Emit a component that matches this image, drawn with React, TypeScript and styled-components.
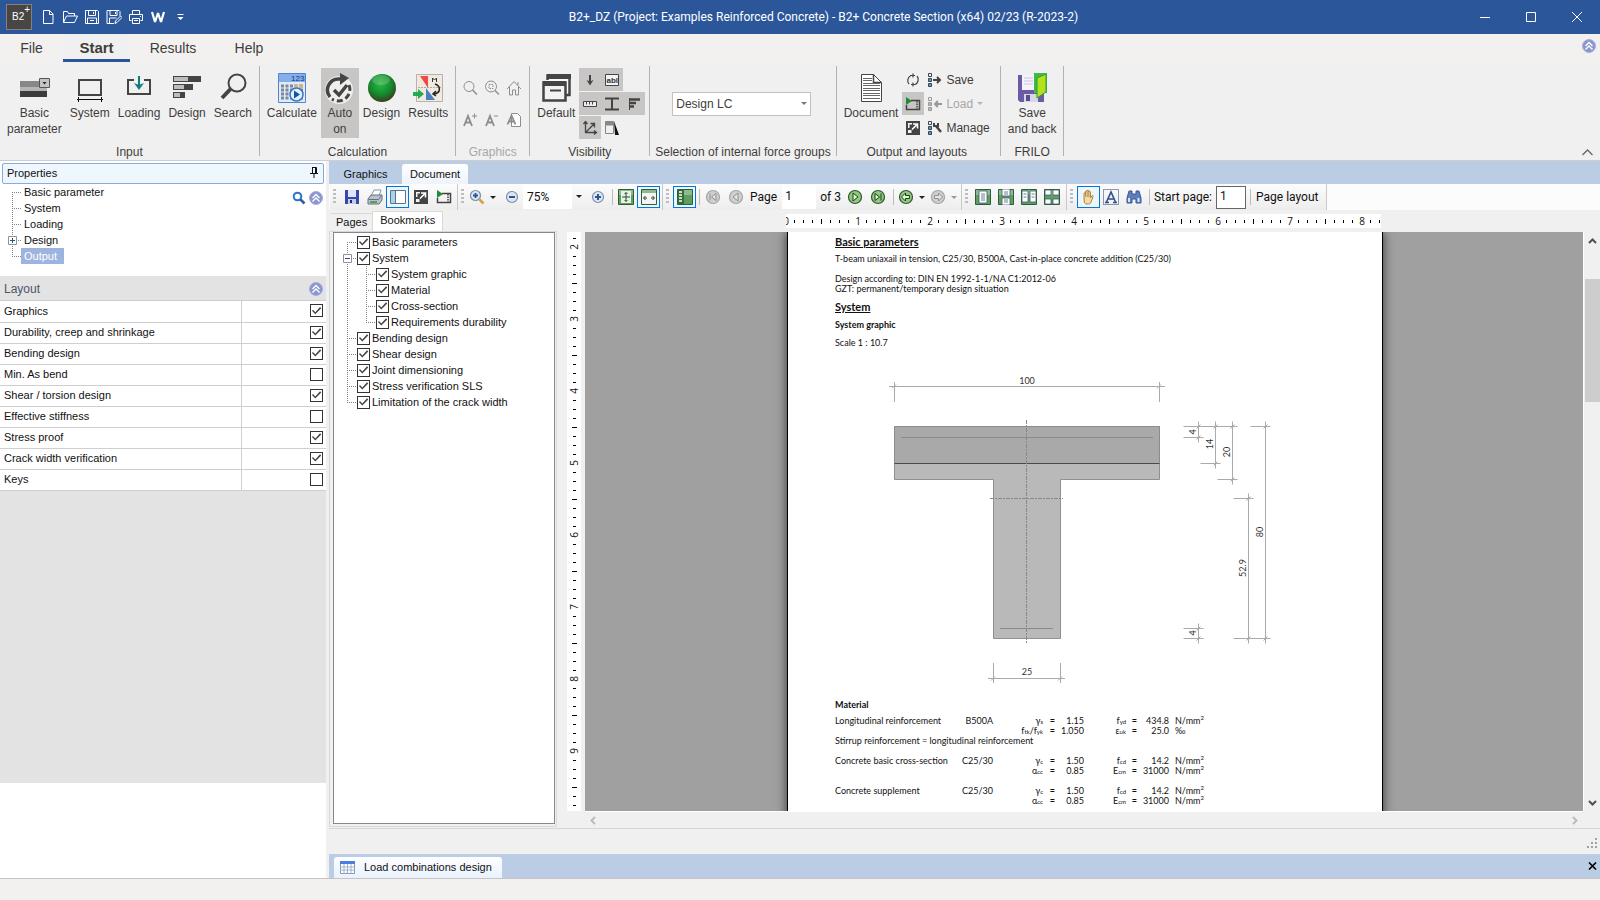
import React, { useState } from 'react';
import styled, { createGlobalStyle, css } from 'styled-components';

const UI = '"Liberation Sans", Arial, sans-serif';
const BAR = 'Roboto, "Noto Sans", sans-serif';
const DOC = 'Lato, "Liberation Sans", sans-serif';

const Global = createGlobalStyle`
  *, *::before, *::after { box-sizing: border-box; }
  body { margin: 0; font-family: ${UI}; font-size: 11px; color: #111; background: #f0f0f0; }
  button, input, select { font: inherit; color: inherit; }
  button { border: 0; background: none; padding: 0; }
  svg { display: block; flex: none; }
`;

const Shell = styled.div`
  display: flex;
  flex-direction: column;
  height: 100vh;
  min-height: 600px;
  overflow: hidden;
`;

/* ---------- title bar ---------- */
const TitleBar = styled.header`
  display: flex;
  align-items: center;
  height: 34px;
  flex: none;
  background: #2b579a;
  color: #fff;
  padding-left: 6px;
`;
const Logo = styled.div`
  display: flex;
  width: 26px;
  height: 26px;
  margin-right: 5px;
  padding: 4px 0 0 5px;
  border: 1px solid #87807a;
  background: #474644;
  font-size: 10px;
  line-height: 16px;
  sup { font-size: 10px; line-height: 8px; margin-top: -3px; }
`;
const QuickButton = styled.button`
  display: grid;
  place-items: center;
  width: 22px;
  height: 26px;
`;
const Title = styled.h1`
  flex: 1;
  margin: 0;
  padding: 0 6px 1px 0;
  text-align: center;
  font: 400 12px/18px ${BAR};
`;
const WindowButton = styled.button`
  display: grid;
  place-items: center;
  width: 46px;
  height: 34px;
`;

/* ---------- ribbon ---------- */
const MenuRow = styled.nav`
  display: flex;
  align-items: center;
  height: 28px;
  flex: none;
  background: #f3f1f0;
`;
const MenuTab = styled.button<{ $active?: boolean; $width: number }>`
  width: ${p => p.$width}px;
  height: 28px;
  padding-top: 2px;
  color: #3f3d3b;
  font-size: ${p => (p.$active ? 15 : 14)}px;
  font-weight: ${p => (p.$active ? 700 : 400)};
  border-bottom: 3px solid ${p => (p.$active ? '#2b579a' : 'transparent')};
  background: ${p => (p.$active ? '#f0f0f0' : 'none')};
`;
const HelpSlot = styled.button`
  margin: 0 4px 4px auto;
`;
const Ribbon = styled.div`
  display: flex;
  flex: none;
  height: 99px;
  padding: 4px 0;
  background: #f0f0f0;
  border-bottom: 1px solid #cfcdcb;
  font-size: 12px;
  color: #3f3d3b;
`;
const Group = styled.section<{ $dim?: boolean; $wide?: boolean }>`
  display: flex;
  flex-direction: column;
  justify-content: space-between;
  border-right: 1px solid #b4b2b0;
  padding: 2px ${p => (p.$wide ? 6 : 3)}px 0 3px;
  height: 90px;
  h2 {
    margin: 0;
    padding: 0 2px;
    text-align: center;
    font: 400 12px/8px ${UI};
    white-space: nowrap;
    color: ${p => (p.$dim ? '#a9a7a5' : 'inherit')};
  }
`;
const GroupBody = styled.div`
  display: flex;
  align-items: flex-start;
`;
const BigButton = styled.button<{ $pressed?: boolean }>`
  display: flex;
  flex-direction: column;
  align-items: center;
  min-width: 38px;
  height: 70px;
  padding: 4px 4px 0;
  line-height: 16px;
  white-space: pre;
  background: ${p => (p.$pressed ? '#c8c6c4' : 'none')};
  svg { margin: 0 -2px 1px; }
`;
const IconGrid = styled.div<{ $cell: number; $top?: number }>`
  display: grid;
  margin: 0 1px 0 0;
  padding-top: ${p => p.$top || 0}px;
  grid-template-columns: repeat(3, 22px);
  grid-auto-rows: ${p => p.$cell - 1}px;
  row-gap: 1px;
`;
const Toggle = styled.button<{ $pressed?: boolean }>`
  display: grid;
  place-items: center;
  width: 22px;
  min-height: 23px;
  background: ${p => (p.$pressed ? '#c8c6c4' : 'none')};
`;
const Column = styled.div`
  display: flex;
  flex-direction: column;
  gap: 1px;
`;
const RibbonLine = styled.button`
  display: flex;
  align-items: center;
  gap: 4px;
  height: 23px;
  padding: 0 4px;
  &:disabled { color: #a9a7a5; }
`;
const SelectWrap = styled.label<{ $ribbon?: boolean }>`
  position: relative;
  display: block;
  width: ${p => (p.$ribbon ? 139 : 63)}px;
  margin: ${p => (p.$ribbon ? '24px 0 0 19px' : '0')};
  select {
    width: 100%;
    height: ${p => (p.$ribbon ? 24 : 24)}px;
    padding: 0 0 0 ${p => (p.$ribbon ? 3 : 4)}px;
    appearance: none;
    border: ${p => (p.$ribbon ? '1px solid #c3c1bf' : '0')};
    border-radius: 0;
    background: ${p => (p.$ribbon ? '#fff' : 'linear-gradient(90deg, #fff 49px, transparent 49px)')};
  }
  svg { position: absolute; right: 4px; top: 10px; pointer-events: none; }
`;
const Collapse = styled.button`
  margin: auto 7px 0 auto;
`;

/* ---------- body ---------- */
const Body = styled.main`
  display: flex;
  flex: 1;
  min-height: 0;
  gap: 3px;
`;
const Side = styled.aside`
  display: flex;
  flex-direction: column;
  width: 326px;
  flex: none;
  background: #fff;
`;
const PanelHead = styled.div`
  display: flex;
  justify-content: space-between;
  align-items: center;
  height: 21px;
  margin: 2px 2px 0;
  padding: 0 5px 2px 4px;
  border: 1px solid #86abe0;
  border-radius: 2px;
  background: #eef6fe;
`;
const TreeArea = styled.div`
  display: flex;
  justify-content: space-between;
  height: 92px;
  padding: 0 3px 0 7px;
`;
const TreeTools = styled.div`
  display: flex;
  align-items: center;
  gap: 3px;
  height: 24px;
  margin-top: 2px;
`;
const List = styled.ul`
  list-style: none;
  margin: 0;
  padding: 0;
`;
const TreeItem = styled.li<{ $selected?: boolean }>`
  display: flex;
  height: 16px;
  button { padding: 0 7px 0 3px; line-height: 15px; }
  ${p => p.$selected && css`button { background: #9db4de; color: #fff; }`}
`;
const SectionHead = styled.div`
  display: flex;
  justify-content: space-between;
  align-items: center;
  height: 25px;
  padding: 1px 3px 0 4px;
  border-bottom: 1px solid #cdcdcd;
  background: #e3e3e3;
  color: #4c5567;
  font-size: 12px;
`;
const PropTable = styled.table`
  width: 100%;
  table-layout: fixed;
  border-collapse: collapse;
  th, td { height: 21px; padding: 0 4px 1px; border-bottom: 1px solid #cfcfcf; }
  th { width: 241px; border-right: 1px solid #cfcfcf; font-weight: 400; text-align: left; }
  td { padding: 0 3px 1px; }
  input { display: block; margin-left: auto; }
`;
const Check = styled.input.attrs({ type: 'checkbox' })`
  appearance: none;
  width: 13px;
  height: 13px;
  margin: 0;
  flex: none;
  border: 1px solid #333;
  background: #fff;
  &:checked::before {
    content: '';
    display: block;
    width: 11px;
    height: 11px;
    background: #444;
    clip-path: polygon(9% 50%, 18% 42%, 39% 64%, 82% 17%, 93% 27%, 39% 82%);
  }
`;
const GreyFill = styled.div`
  flex: 1;
  background: #e3e3e3;
`;
const WhiteFill = styled.div`
  height: 95px;
`;

/* ---------- document side ---------- */
const Work = styled.section`
  display: flex;
  flex-direction: column;
  flex: 1;
  min-width: 0;
`;
const TabStrip = styled.div`
  display: flex;
  align-items: flex-end;
  height: 23px;
  flex: none;
  background: #bbcde5;
`;
const ViewTab = styled.button<{ $active?: boolean }>`
  height: 20px;
  padding: 0 8px 1px;
  border-radius: 3px 3px 0 0;
  background: ${p => (p.$active ? 'linear-gradient(#fdfeff, #eef4fc)' : 'none')};
  &:first-child { width: 73px; }
`;
const ToolBar = styled.div`
  display: flex;
  flex: none;
  height: 26px;
  padding-left: 1px;
  background: #fcfcfc;
  font: 12px/16px ${BAR};
`;
const ToolGroup = styled.div`
  display: flex;
  align-items: center;
  padding-right: 2px;
  background: linear-gradient(#fcfcfc, #ededed);
  border-right: 1px solid #c9c9c9;
  white-space: nowrap;
`;
const Grip = styled.span`
  width: 3px;
  height: 16px;
  margin: 0 4px 0 3px;
  background: repeating-linear-gradient(#bdbdbd 0 2px, transparent 2px 4px);
`;
const ToolButton = styled.button<{ $on?: boolean; $w?: number }>`
  display: grid;
  place-items: center;
  width: ${p => p.$w || 23}px;
  height: 22px;
  ${p => p.$on && css`border: 1px solid #0078d7; background: #eef5fc;`}
`;
const ToolSep = styled.span`
  width: 1px;
  height: 16px;
  margin: 0 1px 0 3px;
  background: #bdbdbd;
`;
const ToolText = styled.button`
  padding: 0 6px 0 4px;
`;
const PageInput = styled.label<{ $boxed?: boolean }>`
  display: flex;
  align-items: center;
  gap: ${p => (p.$boxed ? 4 : 5)}px;
  padding: 0 ${p => (p.$boxed ? 1 : 4)}px 0 3px;
  input {
    width: ${p => (p.$boxed ? 30 : 34)}px;
    height: ${p => (p.$boxed ? 23 : 24)}px;
    padding: 0 3px 2px;
    border: ${p => (p.$boxed ? '1px solid #666' : '0')};
    background: #fff;
  }
`;
const PageCount = styled.span`
  padding-right: 3px;
`;
const Viewer = styled.div`
  display: flex;
  flex: 1;
  min-height: 0;
  border-bottom: 1px solid #d5d5d5;
`;
const Marks = styled.aside`
  display: flex;
  flex-direction: column;
  width: 228px;
  flex: none;
  padding: 1px 0;
`;
const MarkTabs = styled.div`
  display: flex;
  align-items: flex-end;
  padding-left: 2px;
`;
const MarkTab = styled.button<{ $active?: boolean }>`
  height: ${p => (p.$active ? 20 : 18)}px;
  padding: 0 ${p => (p.$active ? 7 : 5)}px ${p => (p.$active ? 3 : 1)}px;
  border: 1px solid #d9d9d9;
  border-width: 1px ${p => (p.$active ? 1 : 0)}px 0;
  background: ${p => (p.$active ? '#fff' : '#f0f0f0')};
`;
const MarkFrame = styled.div`
  flex: 1;
  padding: 0 1px 2px 3px;
  border: 1px solid #d9d9d9;
`;
const MarkBox = styled.div`
  height: 100%;
  padding: 1px 0 0 8px;
  border: 1px solid #828790;
  background: #fff;
`;
const MarkItem = styled.li`
  display: flex;
  align-items: center;
  height: 16px;
  label { display: flex; align-items: center; gap: 2px; white-space: nowrap; }
`;
const Sheet = styled.div`
  display: grid;
  flex: 1;
  min-width: 0;
  padding-left: 10px;
  grid-template-columns: 14px minmax(0, 1fr) 17px;
  grid-template-rows: 22px minmax(0, 1fr) 17px;
`;
const TopRuler = styled.div`
  grid-column: 2;
  display: flex;
  justify-content: center;
  align-items: flex-start;
  padding: 4px 0 0 2px;
`;
const LeftRuler = styled.div`
  grid-column: 1;
  grid-row: 2;
  overflow: hidden;
  background: #fff;
`;
const Canvas = styled.div`
  grid-column: 2;
  grid-row: 2;
  display: flex;
  justify-content: center;
  overflow: hidden;
  margin-left: 4px;
  padding-left: 2px;
  background: #a0a0a0;
`;
const Page = styled.article`
  width: 596px;
  flex: none;
  height: 840px;
  padding-left: 47px;
  border: solid #000;
  border-width: 0 1px;
  background: #fff;
  box-shadow: 0 0 10px #333;
  color: #111;
  font: 9px/10px ${DOC};
`;
const DocHeading = styled.h2`
  margin: 0;
  font: 700 11px/20px ${DOC};
  text-decoration: underline;
`;
const DocSub = styled.h3`
  margin: 0;
  font: 700 9px/10px ${DOC};
`;
const DocLine = styled.p<{ $top: number }>`
  margin: ${p => p.$top}px 0 0;
`;
const Space = styled.div<{ $h: number }>`
  height: ${p => p.$h}px;
`;
const MaterialTable = styled.table`
  width: 400px;
  margin-top: 6px;
  table-layout: fixed;
  border-collapse: collapse;
  td { height: 10px; padding: 0; text-align: right; line-height: 10px; white-space: nowrap; }
  td:last-child { padding-left: 6px; text-align: left; }
  td:first-child { padding-left: 0; text-align: left; }
  td:nth-child(4), td:nth-child(7) { font-weight: 700; }
  sub, sup { font-size: 6px; line-height: 1px; }
  sub { vertical-align: baseline; }
`;
const VScroll = styled.div`
  grid-column: 3;
  grid-row: 2;
  display: flex;
  flex-direction: column;
  align-items: center;
  border-left: 1px solid #fff;
  padding: 5px 0 4px;
`;
const Thumb = styled.div`
  width: 15px;
  height: 123px;
  margin: 33px 0 auto;
  background: #cdcdcd;
`;
const HScroll = styled.div`
  grid-column: 2;
  grid-row: 3;
  display: flex;
  align-items: center;
  justify-content: space-between;
  margin-left: 4px;
  padding: 0 4px;
  border-top: 1px solid #fff;
`;
const Resize = styled.div`
  display: flex;
  justify-content: flex-end;
  align-items: flex-end;
  height: 25px;
  padding: 0 3px 6px;
  flex: none;
`;
const Dock = styled.div`
  display: flex;
  align-items: flex-end;
  justify-content: space-between;
  height: 24px;
  flex: none;
  padding: 0 3px 0 5px;
  background: #bbcde5;
`;
const DockTab = styled.button`
  display: flex;
  align-items: center;
  gap: 9px;
  height: 21px;
  padding: 0 10px 1px 6px;
  border-radius: 3px 3px 0 0;
  background: linear-gradient(#fdfeff, #e9f2fd);
`;
const DockClose = styled.button`
  align-self: center;
`;
const StatusBar = styled.footer`
  height: 22px;
  flex: none;
  border-top: 1px solid #c6c4c2;
  background: #f2f1f0;
`;

/* ---------- icons ---------- */
const D = '#444';
const Svg = ({ w = 16, h = w, children, ...r }: any) => (
  <svg width={w} height={h} viewBox={`0 0 ${w} ${h}`} fill="none" aria-hidden="true" {...r}>{children}</svg>
);
const Caret = ({ c = '#222' }: { c?: string }) => <Svg w={6} h={3}><path d="M0 0h6L3 3z" fill={c} /></Svg>;
const Orb = () => (
  <Svg w={14}>
    <circle cx="7" cy="7" r="6.500" fill="#8b96cf" stroke="#a6aede" />
    <path d="M3.500 7 7 3.500 10.500 7M3.500 10.500 7 7l3.500 3.500" stroke="#fff" strokeWidth="1.300" />
  </Svg>
);

const quick: [string, React.ReactNode][] = [
  ['New', <Svg w={16}><path d="M3.500 1.500h6l3.500 3.500v9.500h-9.500zM9.500 1.500v4h3.500" stroke="#fff" /></Svg>],
  ['Open', <Svg w={16}><path d="M1.500 13.500v-11h4l1 2h6v2.500M1.500 13.500l3-6.500h11l-3 6.500z" stroke="#fff" /></Svg>],
  ['Save', <Svg w={16}><path d="M1.500 1.500h12l1 1v12h-13zM4.500 1.500v5h7v-5M3.500 14.500v-5.500h9v5.500M6 11.500h4M9.500 3v2" stroke="#fff" /></Svg>],
  ['Save as', <Svg w={16}><path d="M8 14.500H1v-13h12l1 1V7M4 1.500v5h7v-5M3.500 14V9h7M9.500 3v2M9 14.500l.5-2.500 5-5 1.500 1.500-5 5z" stroke="#fff" /></Svg>],
  ['Print', <Svg w={16}><path d="M4.500 5.500v-4h7v4M3.500 11.500h-2v-6h13v6h-2M4.500 9.500h7v5h-7zM6 11.500h4M12 7.500h1" stroke="#fff" /></Svg>],
  ['Word', <Svg w={16}><path d="M2 3l3 10L8 4l3 9 3-10" stroke="#fff" strokeWidth="2.200" strokeLinejoin="bevel" /></Svg>],
  ['Customize', <Svg w={16}><path d="M5.500 5.500h6" stroke="#fff" /><path d="M5.500 8h6l-3 3z" fill="#fff" /></Svg>],
];

const IcoParam = () => <Svg w={32}><path d="M2 9h20v6H2z" fill="#888" /><path d="M2 15h27v5H2z" fill="#b5b5b5" /><path d="M2 19h27v6H2z" fill="#3c3c3c" /><path d="M21.500 6.500h10v9h-10z" fill="#c4c4c4" stroke="#555" /><path d="M24.500 10h4l-2 2.500z" fill="#222" /></Svg>;
const IcoSystem = () => <Svg w={32}><path d="M5 8h22v15H5z" stroke={D} strokeWidth="2" /><path d="M3 27.500h26M4.500 25v5M27.500 25v5" stroke="#111" /></Svg>;
const IcoLoading = () => <Svg w={32}><path d="M11 8H5v14h22V8h-6" stroke={D} strokeWidth="2" /><path d="M16 4v10" stroke="#0b7d7c" strokeWidth="2" /><path d="M11 11l5 2 5-2-5 7z" fill="#0b7d7c" /></Svg>;
const IcoDesign = () => <Svg w={32}><path d="M2 4h28v6H2zM2 12h20v6H2zM2 20h12v6H2z" fill={D} /><path d="M3 5h14v4H3zM3 13h10v4H3zM3 21h6v4H3z" fill="#bdbdbd" /></Svg>;
const IcoSearch = () => <Svg w={32}><circle cx="20" cy="11" r="8.500" stroke={D} strokeWidth="2" /><path d="M13.500 17 5 26" stroke={D} strokeWidth="4" /></Svg>;
const IcoCalc = () => (
  <Svg w={32}>
    <path d="M2.500 1.500h27v29h-27z" fill="#dfeafb" stroke="#4f86d4" />
    <path d="M3 2h26v8H3z" fill="#86aeea" />
    <text x="15" y="9" fontSize="8" fill="#123a80" fontFamily="Liberation Sans">123</text>
    {[14, 18, 22, 26].map(y => <path key={y} d={`M5 ${y}h3M9.500 ${y}h3M14 ${y}h3M18.500 ${y}h3M23 ${y}h4`} stroke="#7d8796" strokeWidth="3" />)}
    <path d="M18.500 14h3M23 14h4" stroke="#e0b064" strokeWidth="3" />
    <circle cx="20.500" cy="22.500" r="6.500" fill="#e3f1fd" stroke="#3876c7" strokeWidth="1.500" />
    <path d="M18 18.500v8l6-4z" fill="#17539f" />
  </Svg>
);
const IcoAuto = () => (
  <Svg w={32}>
    <circle cx="15" cy="18" r="14" fill="#fff" opacity=".7" />
    <path d="M6 25A11 11 0 0 1 15 7h4" stroke={D} strokeWidth="3.500" />
    <path d="M16 1l9 5-9 7z" fill={D} />
    <path d="M25 13a11.500 11.500 0 0 1-17 14" stroke={D} strokeWidth="3" strokeDasharray="6 3" />
    <path d="M10 18l5 5 8-10" stroke={D} strokeWidth="3.500" />
  </Svg>
);
const IcoBall = () => (
  <Svg w={32}>
    <defs><radialGradient id="ball" cx=".45" cy=".35" r=".65"><stop offset="0" stopColor="#2fb847" /><stop offset=".6" stopColor="#128a2e" /><stop offset="1" stopColor="#3a3f1c" /></radialGradient></defs>
    <circle cx="16" cy="16" r="14" fill="url(#ball)" />
    <ellipse cx="15" cy="8" rx="9" ry="5" fill="#fff" opacity=".18" />
  </Svg>
);
const IcoResults = () => (
  <Svg w={32}>
    <path d="M4.500 2.500h26v27h-26z" fill="#efe9df" stroke="#b9b0a6" />
    <path d="M8 4h8v12z" fill="#ec4a4a" /><path d="M14 16v12h9z" fill="#4d7fc0" />
    <path d="M6 15.500h23" stroke="#aaa" strokeDasharray="2 1" />
    <path d="M20.500 10V6l2 2 2-2v4" stroke="#333" /><path d="M23 12c6 2 6 9-1 10M24 19l-3 3 3 2" stroke="#222" strokeWidth="1.500" />
    <path d="M1 20h5v-3l6 5-6 5v-3H1z" fill="#1fae4b" />
  </Svg>
);
const IcoDefault = () => <Svg w={32}><path d="M6 2h24v22H6z" fill="#fff" opacity=".6" /><path d="M7.500 8V3.500h22V23H25" stroke={D} strokeWidth="2.500" /><path d="M7 2h24v5H7z" fill={D} /><path d="M3.500 10.500h22v18h-22z" stroke={D} strokeWidth="2.500" fill="#f2f2f2" /><path d="M3 9h23v5H3z" fill={D} /><path d="M10 18.500h11" stroke={D} strokeWidth="2" /></Svg>;
const IcoDocument = () => <Svg w={32}><path d="M6.500 2.500h12l8 8v19h-20z" fill="#fff" stroke={D} /><path d="M18.500 2.500v8h8" stroke={D} strokeWidth="1.500" />{[7, 9, 12, 14, 17, 19, 22, 24, 27].map(y => <path key={y} d={`M8 ${y - 0.5}h${y < 11 ? 9 : 17}`} stroke="#666" />)}</Svg>;
const IcoSaveBack = () => (
  <Svg w={32}>
    <path d="M2 3h26v27H4l-2-2z" fill="#6b5ba5" /><path d="M6 3h14v15H6z" fill="#f4f2fa" />
    <path d="M8 6h9M8 9h9M8 12h9" stroke="#c9c9d6" /><path d="M8 22h14v8H8z" fill="#d8d6e2" /><path d="M10 23h4v6h-4z" fill="#5b4d93" />
    <path d="M18 1h13v20H18z" fill="#3fb94a" /><path d="M21 6l9-4v18l-9 6z" fill="#b5e01c" stroke="#28a03b" />
  </Svg>
);
const g = '#8d8d8d';
const graphicsIcons: [string, React.ReactNode][] = [
  ['Zoom', <Svg w={16}><circle cx="7" cy="6.500" r="5" stroke={g} /><path d="M10.500 10l4.500 4.500" stroke={g} strokeWidth="1.500" /></Svg>],
  ['Zoom window', <Svg w={16}><circle cx="7" cy="6.500" r="5.500" stroke={g} /><path d="M5 4.500h4v4H5z" stroke={g} strokeDasharray="1.500 1" /><path d="M11 10.500l4 4" stroke={g} strokeWidth="1.500" /></Svg>],
  ['Home', <Svg w={16}><path d="M1 9l7-7.500L15 9M3.500 7v8h3v-5h3v5h3V7M12 5V2" stroke={g} /></Svg>],
  ['Larger font', <Svg w={16}><path d="M2 14l4-10 4 10M3.500 10.500h5" stroke={g} strokeWidth="1.800" /><path d="M10 4h5M12.500 1.500v5" stroke={g} /></Svg>],
  ['Smaller font', <Svg w={16}><path d="M2 14l4-10 4 10M3.500 10.500h5" stroke={g} strokeWidth="1.800" /><path d="M10 4h4" stroke={g} /></Svg>],
  ['Font settings', <Svg w={16}><path d="M5.500 1.500h6l3 3v10h-9z" fill="#fff" stroke={g} /><path d="M1.500 12.500l4-9 4 9M3 9.500h5" stroke={g} strokeWidth="1.800" /></Svg>],
];
const visIcons: [string, boolean, React.ReactNode][] = [
  ['Loads', true, <Svg w={16}><path d="M8 3v9" stroke={D} strokeWidth="2" /><path d="M4.500 8L8 9.500 11.500 8 8 13.500z" fill={D} /></Svg>],
  ['Labels', true, <Svg w={16}><path d="M1.500 2.500h13v11h-13z" fill="#f3f3f3" stroke={D} /><text x="2.500" y="11" fontSize="8" fontWeight="700" fill="#333" fontFamily="Liberation Sans">abl</text></Svg>],
  ['', false, null],
  ['Dimensions', true, <Svg w={16}><path d="M1.500 5.500h13v5h-13zM4.500 5.500v3M7.500 5.500v3M10.500 5.500v3" fill="#eee" stroke={D} /></Svg>],
  ['Section', true, <Svg w={16}><path d="M1 2.500h14M1 13.500h14M8 2v11" stroke={D} strokeWidth="2" /></Svg>],
  ['Diagram', true, <Svg w={16}><path d="M3 3.500h11M3 7h7M3 10.500h5" stroke={D} strokeWidth="2.500" /><path d="M3.500 2v12" stroke={D} /></Svg>],
  ['Axes', true, <Svg w={16}><path d="M3.500 2v10.500H14M3.500 12.500L12 4M1.500 4l2-2.500 2 2.500M12 10.500l2.500 2-2.500 2M8.500 3.500h4v4" stroke={D} strokeWidth="1.300" /></Svg>],
  ['Hatching', false, <Svg w={16}><path d="M1.500 1.500h8v4h-8z" fill="#888" /><path d="M1.500 1.500h8v12h-8z" stroke="#888" /><path d="M10 1l5 14h-4z" fill="#111" /></Svg>],
];
const IcoRefresh = () => <Svg w={16}><path d="M6 3.500a5.500 5.500 0 0 0-2 8.500M10 12.500a5.500 5.500 0 0 0 2-8.500M5 3.500h5M8 1.500v4M11 12.500H6M8 10.500v4" stroke={D} strokeWidth="1.200" /></Svg>;
const IcoRun = () => <Svg w={16}><path d="M6 4.500h8.500v9h-13V9" stroke={D} strokeWidth="1.500" /><path d="M12 5v8" stroke={D} strokeWidth="1.500" strokeDasharray="1.500 1" /><path d="M1 1l6 4-6 4z" fill="#1f8b35" /></Svg>;
const IcoExport = () => <Svg w={16}><path d="M1 1h14v14H1z" fill={D} /><path d="M3 3h4v1.500H4.500V8H3zM3 10h3.500v3H3z" fill="#f3f3f3" /><path d="M7 9.500l5-5M8 4h4.500v4.500" stroke="#fff" strokeWidth="1.600" /></Svg>;
const Boxes = ({ kind, off }: { kind: string; off?: boolean }) => {
  const c = off ? '#999' : D;
  const f = off ? '#bbb' : '#3aa4e8';
  return (
    <Svg w={14}>
      <path d="M.5.500h3v3h-3z" stroke={c} /><path d="M.5 5.500h3v3h-3zM.5 10.500h3v3h-3z" fill={f} stroke={c} />
      {kind === 'out' && <path d="M5 7h6M9 4l3 3-3 3" stroke={c} strokeWidth="2" />}
      {kind === 'in' && <path d="M14 7H8M10 4L7 7l3 3" stroke={c} strokeWidth="2" />}
      {kind === 'tool' && <path d="M8 5l5 6" stroke={c} strokeWidth="2.500" />}
      {kind === 'tool' && <path d="M6 2v3h4V2" stroke={c} strokeWidth="2" />}
    </Svg>
  );
};

/* viewer tool icons */
const Green = ({ children }: { children?: React.ReactNode }) => (
  <Svg w={16}><path d="M.5.500h15v15H.5z" fill="#5f9d63" stroke="#2d5f36" /><path d="M1 1h14v5H1z" fill="#a9d0aa" opacity=".6" />{children}</Svg>
);
const Disc = ({ d, off, lines }: { d: string; off?: boolean; lines?: string }) => (
  <Svg w={16}>
    <circle cx="8" cy="8" r="6.500" fill={off ? '#cfcfcf' : '#8fc97e'} stroke={off ? '#a5a5a5' : '#31572f'} strokeWidth="1.200" />
    <path d={d} fill={off ? '#e3e3e3' : '#e4f6df'} stroke={off ? '#909090' : '#1d3b1d'} />
    {lines && <path d={lines} stroke={off ? '#909090' : '#1d3b1d'} />}
  </Svg>
);
const Blue = ({ plus }: { plus?: boolean }) => (
  <Svg w={14}><circle cx="7" cy="7" r="5.500" fill="#dbe6f2" stroke="#7d90a8" strokeWidth="1.200" /><path d={plus ? 'M4 7h6M7 4v6' : 'M4 7h6'} stroke="#2d5591" strokeWidth="2" /></Svg>
);
const IcoDisk = () => <Svg w={16}><path d="M1 1h14v14H1z" fill="#3a49a8" /><path d="M4 1h8v7H4z" fill="#dfe5f8" /><path d="M4 10h8v5H4z" fill="#c5cbe6" /><path d="M6 11h2v3H6z" fill="#1d2a70" /></Svg>;
const IcoPrinter = () => <Svg w={16}><path d="M4 7l3-6h7l-2 6z" fill="#fff" stroke="#8794a8" /><path d="M1 10l3-4h11v5l-3 4H1z" fill="#b9c3d0" stroke="#66707f" /><path d="M1.500 10.500h10l3-4" stroke="#66707f" /><path d="M3 12h7v2H3z" fill="#4aa64f" /></Svg>;
const IcoPane = () => <Svg w={16}><path d="M.5 1.500h15v13H.5z" fill="#fff" stroke="#5d7488" /><path d="M1 2h4v12H1z" fill="#a9d3ea" /><path d="M5.500 2v12" stroke="#5d7488" /></Svg>;
const IcoLens = () => <Svg w={16}><circle cx="6.500" cy="6.500" r="5" fill="#dbe8f5" stroke="#7d90a8" strokeWidth="1.200" /><path d="M4 6.500h5M6.500 4v5" stroke="#2d5591" strokeWidth="1.800" /><path d="M10.500 10.500l4 4" stroke="#d8a13c" strokeWidth="2.500" /></Svg>;
const IcoFit = () => <Green><path d="M3 2h10v12H3z" fill="#e8f3e8" /><path d="M8 3.500v9M4 8h8M6.500 5L8 3.500 9.500 5M6.500 11L8 12.500 9.500 11" stroke="#2a4d2e" /></Green>;
const IcoWidth = () => <Green><path d="M1 4h14v11H1z" fill="#f2f6f2" /><path d="M3 9h3M10 9h3M4.500 7L2.500 9l2 2M11.500 7l2 2-2 2" stroke="#333" /></Green>;
const IcoThumbs = () => <Green><path d="M1 1h6v14H1z" fill="#356c3c" /><path d="M2 3h3M2 6h3M2 9h3M2 12h3" stroke="#fff" strokeWidth="1.500" /></Green>;
const Leaf = ({ x, y, w, h }: any) => <path d={`M${x} ${y}h${w}v${h}h-${w}z`} fill="#fff" stroke="#3f5a72" strokeWidth=".8" />;
const IcoHand = () => <Svg w={16}><path d="M4 9V4.500c0-1 1.500-1 1.500 0V2.500c0-1 1.600-1 1.600 0V2c0-1 1.700-1 1.700 0v1c0-1 1.600-1 1.600 0V9l1.200-2c.8-1 1.900-.3 1.500.6L11 13c-.5 1.500-1 2-2.500 2H7c-1.500 0-2.300-.8-2.700-2z" fill="#f6dca4" stroke="#a8823f" /><path d="M5.600 4v4M7.200 3v5M8.800 3v5" stroke="#a8823f" strokeWidth=".8" /></Svg>;
const IcoTextSel = () => <Svg w={16}><path d="M.5.500h15v15H.5z" stroke="#223a66" strokeDasharray="1 1" /><path d="M3.500 13L8 3l4.500 10M5 10h6M2 13.500h4M10 13.500h4" stroke="#2f4f8f" strokeWidth="1.600" /></Svg>;
const IcoBino = () => <Svg w={16}><path d="M3 2h3v3h4V2h3l2 7v5h-5v-4H6v4H1V9z" fill="#5a7dbd" stroke="#3a5a92" /><path d="M3 9v4M12.500 9v4" stroke="#d8e4f8" strokeWidth="2" /></Svg>;
const Chevron = ({ d, c = '#505050' }: { d: string; c?: string }) => <Svg w={9}><path d={d} stroke={c} strokeWidth="2" /></Svg>;

/* dotted connector in front of a tree entry */
const Branch = ({ w, last, first, box, deep }: { w: number; last?: boolean; first?: boolean; box?: 'plus' | 'minus'; deep?: boolean }) => (
  <Svg w={w} h={16} stroke="#808080">
    {deep && <path d="M5.500 0v16" strokeDasharray="1 1" />}
    <path d={`M${deep ? 24 : 5}.500 ${first ? 8 : 0}v${first || last ? 8 : 16}`} strokeDasharray="1 1" />
    <path d={`M${deep ? 24 : 5} 8.500h${w - (deep ? 24 : 5)}`} strokeDasharray="1 1" />
    {box && <path d="M1.500 4.500h8v8h-8z" fill="#fff" stroke="#919191" />}
    {box && <path d={box === 'plus' ? 'M3 8.500h5M5.500 6v5' : 'M3 8.500h5'} stroke="#2b4f9a" />}
  </Svg>
);

const HRuler = () => (
  <Svg w={595} h={14}>
    <path d="M0 0h595v14H0z" fill="#fff" />
    {Array.from({ length: 67 }, (_, i) => i).map(i =>
      i % 8 === 0
        ? <text key={i} x={i * 9} y="11" fontSize="10" textAnchor="middle" fill="#111" fontFamily="Open Sans">{i / 8}</text>
        : <path key={i} d={`M${i * 9 - 1}.500 ${i % 4 ? 6 : 5}v${i % 4 ? 3 : 5}`} stroke="#000" />)}
  </Svg>
);
const VRuler = () => (
  <Svg w={14} h={580}>
    {Array.from({ length: 64 }, (_, i) => i).map(i => {
      const y = 6 + i * 9;
      return (i + 15) % 8 === 0
        ? <text key={i} transform={`translate(11 ${y}) rotate(-90)`} fontSize="10" textAnchor="middle" fill="#111" fontFamily="Open Sans">{(i + 15) / 8}</text>
        : <path key={i} d={`M${i % 4 === 1 ? 5 : 6} ${y}.500h${i % 4 === 1 ? 5 : 3}`} stroke="#000" />;
    })}
  </Svg>
);

/* dimension chain of the section drawing */
const DimV = ({ x, y1, y2, label, ty }: any) => (
  <>
    <path d={`M${x} ${y1 - 5}V${y2 + 5}M${x - 15} ${y1}h20M${x - 15} ${y2}h20M${x - 2} ${y1 + 2}l4-4M${x - 2} ${y2 + 2}l4-4`} />
    <text transform={`translate(${x - 3} ${ty}) rotate(-90)`}>{label}</text>
  </>
);
const Drawing = styled.svg`
  text {
    stroke: none;
    fill: #333;
    font: 9px ${DOC};
    text-anchor: middle;
  }
`;
const SectionDrawing = () => (
  <Drawing width="460" height="320" viewBox="0 0 460 320" fill="none" stroke="#aaa" role="img" aria-label="T-beam cross-section">
    <path d="M59.500 56.500h265v53h-99v159h-67v-159h-99z" fill="#b9b9b9" stroke="#909090" />
    <path d="M59.500 56.500h265v37h-265z" fill="#a9a9a9" stroke="#8c8c8c" />
    <path d="M59.500 93.500h265" stroke="#4a4a4a" />
    <path d="M66 67.500h252M165 258.500h53" stroke="#8a8a8a" />
    <path d="M191.500 50v224M155 128.500h73" stroke="#888" strokeDasharray="4 1 2 1" />
    <path d="M54 16.500h276M59.500 12v20M324.500 12v20M57 18.500l4-4M322 18.500l4-4" />
    <text x="192" y="14">100</text>
    <path d="M153 308.500h77M158.500 293v20M225.500 293v20M156 310.500l4-4M223 310.500l4-4" />
    <text x="192" y="305">25</text>
    <DimV x={363.5} y1={56.5} y2={67.5} label="4" ty={62} />
    <DimV x={380.5} y1={56.5} y2={93.5} label="14" ty={74} />
    <DimV x={397.5} y1={56.5} y2={109.5} label="20" ty={82} />
    <DimV x={413.5} y1={128.5} y2={268.5} label="52.9" ty={198} />
    <DimV x={430.5} y1={56.5} y2={268.5} label="80" ty={162} />
    <DimV x={363.5} y1={258.5} y2={268.5} label="4" ty={263} />
  </Drawing>
);

/* ---------- data ---------- */
const layoutRows: [string, boolean][] = [
  ['Graphics', true], ['Durability, creep and shrinkage', true], ['Bending design', true],
  ['Min. As bend', false], ['Shear / torsion design', true], ['Effective stiffness', false],
  ['Stress proof', true], ['Crack width verification', true], ['Keys', false],
];
const bookmarks: { t: string; sub?: boolean; last?: boolean; first?: boolean; box?: 'minus' }[] = [
  { t: 'Basic parameters', first: true }, { t: 'System', box: 'minus' },
  { t: 'System graphic', sub: true }, { t: 'Material', sub: true }, { t: 'Cross-section', sub: true },
  { t: 'Requirements durability', sub: true, last: true }, { t: 'Bending design' }, { t: 'Shear design' },
  { t: 'Joint dimensioning' }, { t: 'Stress verification SLS' }, { t: 'Limitation of the crack width', last: true },
];
const S = ({ a, b, c, d }: { a: string; b: string; c?: string; d?: string }) => <>{a}<sub>{b}</sub>{c && <>/{c}<sub>{d}</sub></>}</>;
const Nmm = () => <>N/mm<sup>2</sup></>;
const material: React.ReactNode[][] = [
  ['Longitudinal reinforcement', 'B500A', <S a="γ" b="s" />, '=', '1.15', <S a="f" b="yd" />, '=', '434.8', <Nmm />],
  ['', '', <S a="f" b="tk" c="f" d="yk" />, '=', '1.050', <S a="ε" b="uk" />, '=', '25.0', '‰'],
  ['Stirrup reinforcement = longitudinal reinforcement'],
  [],
  ['Concrete basic cross-section', 'C25/30', <S a="γ" b="c" />, '=', '1.50', <S a="f" b="cd" />, '=', '14.2', <Nmm />],
  ['', '', <S a="α" b="cc" />, '=', '0.85', <S a="E" b="cm" />, '=', '31000', <Nmm />],
  [],
  ['Concrete supplement', 'C25/30', <S a="γ" b="c" />, '=', '1.50', <S a="f" b="cd" />, '=', '14.2', <Nmm />],
  ['', '', <S a="α" b="cc" />, '=', '0.85', <S a="E" b="cm" />, '=', '31000', <Nmm />],
];
const columns = [118, 40, 50, 12, 29, 42, 11, 32, 66];

export default function App() {
  const [props, setProps] = useState(layoutRows.map(r => r[1]));
  return (
    <Shell>
      <Global />
      <TitleBar>
        <Logo>B2<sup>+</sup></Logo>
        {quick.map(([n, i]) => <QuickButton key={n} aria-label={n}>{i}</QuickButton>)}
        <Title>B2+_DZ (Project: Examples Reinforced Concrete) - B2+ Concrete Section (x64) 02/23 (R-2023-2)</Title>
        <WindowButton aria-label="Minimize"><Svg w={10}><path d="M0 5.500h10" stroke="#fff" /></Svg></WindowButton>
        <WindowButton aria-label="Maximize"><Svg w={10}><path d="M.5.500h9v9h-9z" stroke="#fff" /></Svg></WindowButton>
        <WindowButton aria-label="Close"><Svg w={10}><path d="M0 0l10 10M10 0L0 10" stroke="#fff" /></Svg></WindowButton>
      </TitleBar>

      <MenuRow>
        <MenuTab $width={63}>File</MenuTab>
        <MenuTab $width={67} $active>Start</MenuTab>
        <MenuTab $width={86}>Results</MenuTab>
        <MenuTab $width={66}>Help</MenuTab>
        <HelpSlot aria-label="Help"><Orb /></HelpSlot>
      </MenuRow>

      <Ribbon>
        <Group>
          <GroupBody>
            <BigButton><IcoParam />{'Basic\nparameter'}</BigButton>
            <BigButton><IcoSystem />System</BigButton>
            <BigButton><IcoLoading />Loading</BigButton>
            <BigButton><IcoDesign />Design</BigButton>
            <BigButton><IcoSearch />Search</BigButton>
          </GroupBody>
          <h2>Input</h2>
        </Group>
        <Group>
          <GroupBody>
            <BigButton><IcoCalc />Calculate</BigButton>
            <BigButton $pressed><IcoAuto />{'Auto\non'}</BigButton>
            <BigButton><IcoBall />Design</BigButton>
            <BigButton><IcoResults />Results</BigButton>
          </GroupBody>
          <h2>Calculation</h2>
        </Group>
        <Group $dim>
          <IconGrid $cell={32} $top={4}>
            {graphicsIcons.map(([n, i]) => <Toggle key={n} disabled aria-label={n}>{i}</Toggle>)}
          </IconGrid>
          <h2>Graphics</h2>
        </Group>
        <Group>
          <GroupBody>
            <BigButton><IcoDefault />Default</BigButton>
            <IconGrid $cell={24}>
              {visIcons.map(([n, on, i], k) => i ? <Toggle key={k} $pressed={on} aria-label={n}>{i}</Toggle> : <span key={k} />)}
            </IconGrid>
          </GroupBody>
          <h2>Visibility</h2>
        </Group>
        <Group>
          <SelectWrap $ribbon>
            <select aria-label="Internal force group"><option>Design LC</option></select>
            <Caret c="#777" />
          </SelectWrap>
          <h2>Selection of internal force groups</h2>
        </Group>
        <Group $wide>
          <GroupBody>
            <BigButton><IcoDocument />Document</BigButton>
            <Column>
              <Toggle aria-label="Refresh"><IcoRefresh /></Toggle>
              <Toggle $pressed aria-label="Run"><IcoRun /></Toggle>
              <Toggle aria-label="Export"><IcoExport /></Toggle>
            </Column>
            <Column>
              <RibbonLine><Boxes kind="out" />Save</RibbonLine>
              <RibbonLine disabled><Boxes kind="in" off />Load<Caret c="#b5b5b5" /></RibbonLine>
              <RibbonLine><Boxes kind="tool" />Manage</RibbonLine>
            </Column>
          </GroupBody>
          <h2>Output and layouts</h2>
        </Group>
        <Group>
          <GroupBody><BigButton><IcoSaveBack />{'Save\nand back'}</BigButton></GroupBody>
          <h2>FRILO</h2>
        </Group>
        <Collapse aria-label="Collapse ribbon"><Svg w={11} h={7}><path d="M.5 6L5.500 1l5 5" stroke="#666" strokeWidth="1.300" /></Svg></Collapse>
      </Ribbon>

      <Body>
        <Side>
          <PanelHead>
            Properties
            <Svg w={8} h={11}><path d="M2 .5h4.500v6M2.500.500v6M5.500.500v6M0 6.500h8M4 7v4" stroke="#111" /></Svg>
          </PanelHead>
          <TreeArea>
            <List>
              <TreeItem><Branch w={14} first /><button>Basic parameter</button></TreeItem>
              <TreeItem><Branch w={14} /><button>System</button></TreeItem>
              <TreeItem><Branch w={14} /><button>Loading</button></TreeItem>
              <TreeItem><Branch w={14} box="plus" /><button>Design</button></TreeItem>
              <TreeItem $selected><Branch w={14} last /><button>Output</button></TreeItem>
            </List>
            <TreeTools>
              <button aria-label="Search"><Svg w={14}><circle cx="5.500" cy="5.500" r="3.800" stroke="#2d74c4" strokeWidth="2" /><path d="M8.500 8.500l4 4" stroke="#2a5ea8" strokeWidth="2.500" /></Svg></button>
              <button aria-label="Collapse all"><Orb /></button>
            </TreeTools>
          </TreeArea>
          <SectionHead>Layout<button aria-label="Collapse layout"><Orb /></button></SectionHead>
          <PropTable>
            <tbody>
              {layoutRows.map(([t], i) => (
                <tr key={t}>
                  <th scope="row"><label htmlFor={`p${i}`}>{t}</label></th>
                  <td><Check id={`p${i}`} checked={props[i]} onChange={() => setProps(props.map((v, k) => (k === i ? !v : v)))} /></td>
                </tr>
              ))}
            </tbody>
          </PropTable>
          <GreyFill />
          <WhiteFill />
        </Side>

        <Work>
          <TabStrip>
            <ViewTab>Graphics</ViewTab>
            <ViewTab $active>Document</ViewTab>
          </TabStrip>
          <ToolBar>
            <ToolGroup>
              <Grip />
              <ToolButton aria-label="Save"><IcoDisk /></ToolButton>
              <ToolButton aria-label="Print"><IcoPrinter /></ToolButton>
              <ToolButton $on aria-label="Side pane"><IcoPane /></ToolButton>
              <ToolButton aria-label="Export"><IcoExport /></ToolButton>
              <ToolButton aria-label="Run"><IcoRun /></ToolButton>
            </ToolGroup>
            <ToolGroup>
              <Grip />
              <ToolButton $w={18} aria-label="Zoom in tool"><IcoLens /></ToolButton>
              <ToolButton $w={14} aria-label="Zoom options"><Caret /></ToolButton>
              <ToolButton aria-label="Zoom out"><Blue /></ToolButton>
              <SelectWrap>
                <select aria-label="Zoom"><option>75%</option></select>
                <Caret />
              </SelectWrap>
              <ToolButton aria-label="Zoom in"><Blue plus /></ToolButton>
              <ToolSep />
              <ToolButton aria-label="Fit page"><IcoFit /></ToolButton>
              <ToolButton $on aria-label="Fit width"><IcoWidth /></ToolButton>
            </ToolGroup>
            <ToolGroup>
              <Grip />
              <ToolButton $on aria-label="Thumbnails"><IcoThumbs /></ToolButton>
              <ToolSep />
              <ToolButton disabled aria-label="First page"><Disc off d="M11 4.500v7L6.500 8z" lines="M5 4.500v7" /></ToolButton>
              <ToolButton disabled aria-label="Previous page"><Disc off d="M10 4v8L5 8z" /></ToolButton>
              <PageInput>Page<input defaultValue="1" /></PageInput>
              <PageCount>of 3</PageCount>
              <ToolButton aria-label="Next page"><Disc d="M6 4v8l5-4z" /></ToolButton>
              <ToolButton aria-label="Last page"><Disc d="M5 4.500v7L9.500 8z" lines="M11 4.500v7" /></ToolButton>
              <ToolSep />
              <ToolButton aria-label="Back"><Disc d="M3.500 8L7.500 4v2.500h4v3h-4V12z" /></ToolButton>
              <ToolButton $w={9} aria-label="Back history"><Caret /></ToolButton>
              <ToolButton disabled aria-label="Forward"><Disc off d="M12.500 8L8.500 4v2.500h-4v3h4V12z" /></ToolButton>
              <ToolButton $w={9} disabled aria-label="Forward history"><Caret c="#999" /></ToolButton>
            </ToolGroup>
            <ToolGroup>
              <Grip />
              <ToolButton aria-label="Single page"><Green><Leaf x={4} y={2} w={8} h={12} /><path d="M6 5h4M6 7h4M6 9h4M6 11h4" stroke="#6b7f96" /></Green></ToolButton>
              <ToolButton aria-label="Continuous"><Green><Leaf x={4} y={0} w={8} h={7} /><Leaf x={4} y={9} w={8} h={7} /><path d="M6 3h4M6 5h4M6 11h4M6 13h4" stroke="#6b7f96" /></Green></ToolButton>
              <ToolButton aria-label="Two pages"><Green><Leaf x={1} y={2} w={6} h={11} /><Leaf x={9} y={2} w={6} h={11} /><path d="M2.500 5h3M2.500 8h3M10.500 5h3M10.500 8h3" stroke="#6b7f96" /></Green></ToolButton>
              <ToolButton aria-label="Two pages continuous"><Green><Leaf x={1} y={1} w={6} h={5} /><Leaf x={9} y={1} w={6} h={5} /><Leaf x={1} y={10} w={6} h={5} /><Leaf x={9} y={10} w={6} h={5} /></Green></ToolButton>
            </ToolGroup>
            <ToolGroup>
              <Grip />
              <ToolButton $on aria-label="Pan"><IcoHand /></ToolButton>
              <ToolButton aria-label="Select text"><IcoTextSel /></ToolButton>
              <ToolButton aria-label="Find"><IcoBino /></ToolButton>
              <ToolSep />
              <PageInput $boxed>Start page:<input defaultValue="1" /></PageInput>
              <ToolSep />
              <ToolText>Page layout</ToolText>
            </ToolGroup>
          </ToolBar>

          <Viewer>
            <Marks>
              <MarkTabs>
                <MarkTab>Pages</MarkTab>
                <MarkTab $active>Bookmarks</MarkTab>
              </MarkTabs>
              <MarkFrame>
                <MarkBox>
                  <List>
                    {bookmarks.map(b => (
                      <MarkItem key={b.t}>
                        <Branch w={b.sub ? 34 : 15} deep={b.sub} last={b.last} first={b.first} box={b.box} />
                        <label><Check defaultChecked />{b.t}</label>
                      </MarkItem>
                    ))}
                  </List>
                </MarkBox>
              </MarkFrame>
            </Marks>
            <Sheet>
              <TopRuler><HRuler /></TopRuler>
              <LeftRuler><VRuler /></LeftRuler>
              <Canvas>
                <Page>
                  <DocHeading>Basic parameters</DocHeading>
                  <DocLine $top={2}>T-beam uniaxail in tension, C25/30, B500A, Cast-in-place concrete addition (C25/30)</DocLine>
                  <DocLine $top={10}>Design according to: DIN EN 1992-1-1/NA C1:2012-06</DocLine>
                  <DocLine $top={0}>GZT: permanent/temporary design situation</DocLine>
                  <Space $h={3} />
                  <DocHeading>System</DocHeading>
                  <Space $h={3} />
                  <DocSub>System graphic</DocSub>
                  <DocLine $top={8}>Scale 1 : 10.7</DocLine>
                  <Space $h={22} />
                  <SectionDrawing />
                  <Space $h={10} />
                  <DocSub>Material</DocSub>
                  <MaterialTable>
                    <colgroup>{columns.map((w, i) => <col key={i} width={w} />)}</colgroup>
                    <tbody>
                      {material.map((r, i) => (
                        <tr key={i}>
                          {r.length < 2
                            ? <td colSpan={9}>{r[0]}</td>
                            : r.map((c, k) => <td key={k}>{c}</td>)}
                        </tr>
                      ))}
                    </tbody>
                  </MaterialTable>
                </Page>
              </Canvas>
              <VScroll>
                <button aria-label="Scroll up"><Chevron d="M1 6l3.500-3.500L8 6" /></button>
                <Thumb />
                <button aria-label="Scroll down"><Chevron d="M1 3l3.500 3.500L8 3" /></button>
              </VScroll>
              <HScroll>
                <button aria-label="Scroll left"><Chevron c="#bcbcbc" d="M6 1L2.500 4.500 6 8" /></button>
                <button aria-label="Scroll right"><Chevron c="#bcbcbc" d="M3 1l3.500 3.500L3 8" /></button>
              </HScroll>
            </Sheet>
          </Viewer>
          <Resize><Svg w={10}><path d="M8 0h2v2H8zM4 4h2v2H4zM8 4h2v2H8zM0 8h2v2H0zM4 8h2v2H4zM8 8h2v2H8z" fill="#a3a3a3" /></Svg></Resize>
          <Dock>
            <DockTab>
              <Svg w={15} h={13}><path d="M.5.500h14v12H.5z" fill="#fff" stroke="#8296b5" /><path d="M0 0h15v3H0z" fill="#4a7fe0" /><path d="M0 6h15M0 9h15M4 3v10M7.500 3v10M11 3v10" stroke="#9fb0cc" /></Svg>
              Load combinations design
            </DockTab>
            <DockClose aria-label="Close panel"><Svg w={9} h={8}><path d="M1 .5l7 7M8 .5l-7 7" stroke="#000" strokeWidth="1.600" /></Svg></DockClose>
          </Dock>
        </Work>
      </Body>
      <StatusBar />
    </Shell>
  );
}
